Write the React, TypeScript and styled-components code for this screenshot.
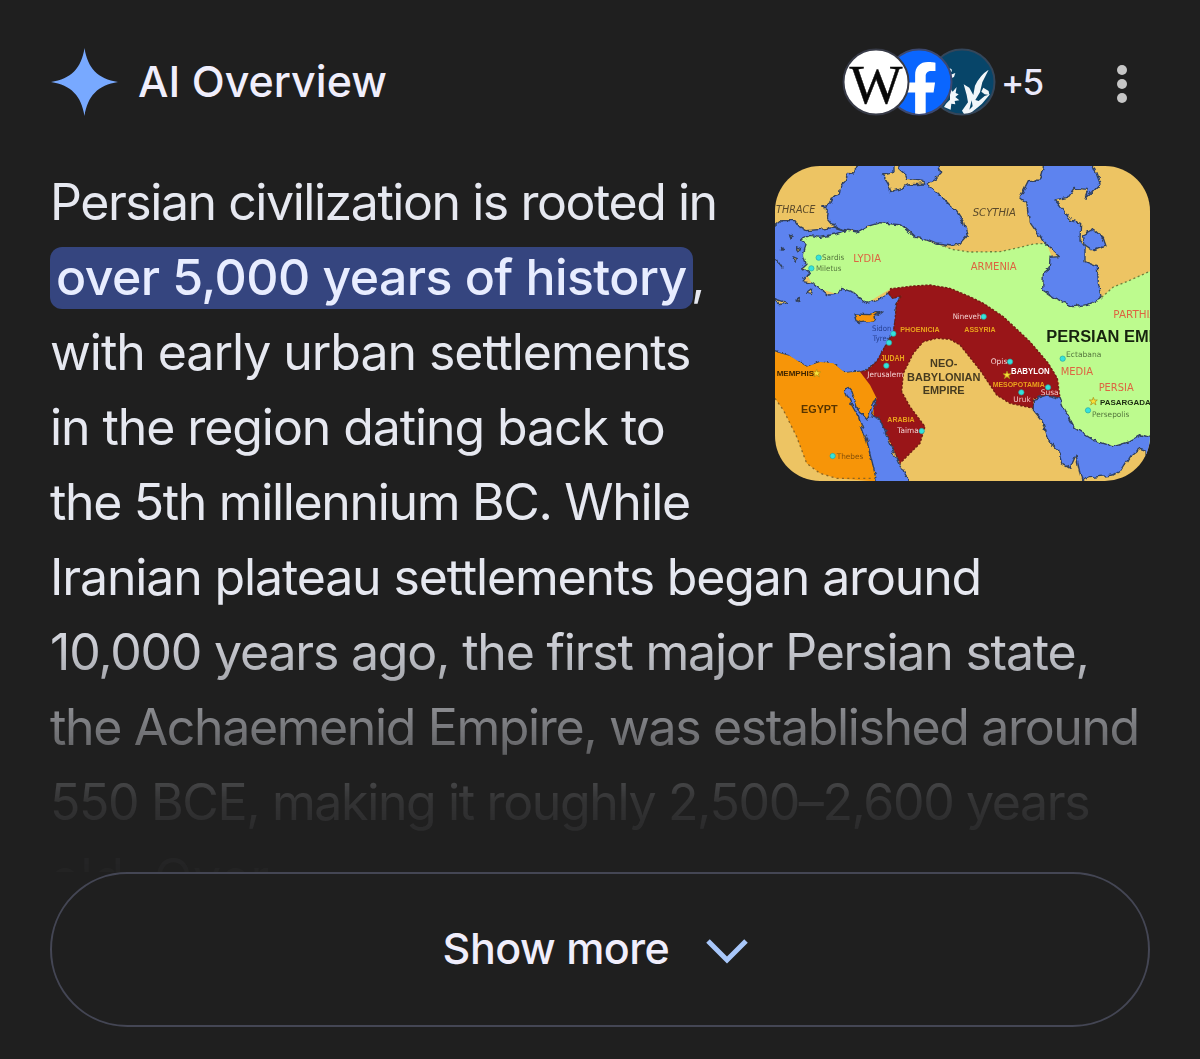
import React, { ReactElement } from 'react'
import { FaFacebookF } from 'react-icons/fa'
import styled, { createGlobalStyle } from 'styled-components'

const FONT = "Inter, 'Open Sans', sans-serif"

const GlobalStyle = createGlobalStyle`
  body {
    margin: 0;
    background: #1f1f1f;
    font-family: ${FONT};
  }
`

const Card = styled.main`
  box-sizing: border-box;
  display: flex;
  flex-direction: column;
  width: 1200px;
  height: 1059px;
  padding: 44px 50px 32px;
  overflow: hidden;
  background: #1f1f1f;
`

const Header = styled.header`
  display: flex;
  align-items: center;
  height: 76px;
  padding-left: 1px;
`

const Title = styled.h1`
  flex: 1;
  margin: 0 0 2px 20px;
  color: #f0eefc;
  font-size: 43px;
  font-weight: 500;
  line-height: 74px;
  letter-spacing: 0;
`

const Sources = styled.div`
  display: flex;
  align-items: center;
`

const SourceBadge = styled.svg<{ $layer: number }>`
  display: block;
  z-index: ${({ $layer }) => $layer};
  width: 68px;
  height: 68px;
  margin: 0 -25px 1px 0;
`

const SourceCount = styled.span`
  width: 42px;
  margin-left: 30px;
  color: #e9e8fb;
  font-size: 35px;
  font-weight: 500;
  letter-spacing: -1.8px;
`

const MenuButton = styled.button`
  display: flex;
  flex-direction: column;
  gap: 4px;
  margin: 3px 23px 0 74px;
  padding: 0;
  border: 0;
  background: none;
`

const Dot = styled.span`
  width: 10px;
  height: 10px;
  border-radius: 50%;
  background: #c6c6c6;
`

const Body = styled.section`
  display: flex;
  justify-content: space-between;
  height: 707px;
  margin-top: 45px;
  overflow: hidden;
  mask-image: linear-gradient(
    #000 450px,
    rgba(0, 0, 0, 0.45) 562px,
    rgba(0, 0, 0, 0.1) 636px,
    rgba(0, 0, 0, 0.03) 690px,
    rgba(0, 0, 0, 0.02) 707px
  );
`

const Summary = styled.p`
  flex: none;
  width: 725px;
  margin: 0;
  color: #e6e8f0;
  font-size: 50px;
  line-height: 75px;
`

const Line = styled.span<{ $tracking: number }>`
  display: block;
  height: 75px;
  letter-spacing: ${({ $tracking }) => $tracking}px;
  white-space: nowrap;
`

const Highlight = styled.mark`
  display: inline-block;
  box-sizing: border-box;
  width: 643px;
  height: 62px;
  margin-right: -2px;
  padding-left: 6px;
  border-radius: 12px;
  background: #35457f;
  color: #e8edff;
  font-weight: 500;
  line-height: 60px;
`

const MapThumb = styled.svg`
  display: block;
  flex: none;
  width: 375px;
  height: 315px;
  margin-top: 1px;
  border-radius: 45px;
`

const ShowMore = styled.button`
  display: flex;
  flex: none;
  align-items: center;
  justify-content: center;
  box-sizing: border-box;
  height: 155px;
  padding: 0 9px 3px 0;
  border: 2px solid #444654;
  border-radius: 78px;
  background: #1f1f1f;
  color: #f0eefc;
  font-family: ${FONT};
  font-size: 43px;
  font-weight: 500;
  letter-spacing: -0.5px;
`

const Chevron = styled.svg`
  width: 42px;
  height: 26px;
  margin: 6px 0 0 37px;
`

const LINES = [
  { text: 'with early urban settlements', tracking: -1.05 },
  { text: 'in the region dating back to', tracking: -1.08 },
  { text: 'the 5th millennium BC. While', tracking: -1.34 },
  { text: 'Iranian plateau settlements began around', tracking: -1.14 },
  { text: '10,000 years ago, the first major Persian state,', tracking: -1.2 },
  { text: 'the Achaemenid Empire, was established around', tracking: -1.37 },
  { text: '550 BCE, making it roughly 2,500–2,600 years', tracking: -1.36 },
  { text: 'old. Over', tracking: 0.6 },
]

const Sparkle = (): ReactElement => (
  <svg width="67" height="68" viewBox="0 0 67 68">
    <path d="M33.5 0C36.5 20 47 31 67 34C47 37 36.5 48 33.5 68C30.5 48 20 37 0 34C20 31 30.5 20 33.5 0Z" fill="#78a9ff" />
  </svg>
)

const SourceIcons = (): ReactElement => (
  <>
    <SourceBadge $layer={3} viewBox="0 0 68 68">
      <circle cx="34" cy="34" r="32.5" fill="#fff" stroke="#373a46" strokeWidth="2" />
      <text
        x="7.5"
        y="55"
        textLength="53"
        lengthAdjust="spacingAndGlyphs"
        fontFamily="'Liberation Serif', serif"
        fontSize="55"
        fill="#080808"
        stroke="#080808"
        strokeWidth="0.4"
      >
        W
      </text>
    </SourceBadge>
    <SourceBadge $layer={2} viewBox="0 0 68 68">
      <clipPath id="badge">
        <circle cx="34" cy="34" r="32" />
      </clipPath>
      <circle cx="34" cy="34" r="32.5" fill="#0a66ff" stroke="#3c4870" strokeWidth="2" />
      <g clipPath="url(#badge)">
        <FaFacebookF x="9" y="14" size={54} color="#fff" />
      </g>
    </SourceBadge>
    <SourceBadge $layer={1} viewBox="0 0 68 68">
      <circle cx="34" cy="34" r="32.5" fill="#074569" stroke="#34465a" strokeWidth="2" />
      <g clipPath="url(#badge)">
        <g transform="translate(-88 -3) scale(0.3333)" fill="#f1f6fa">
          <path d="M446 74Q420 90 405 122L400 150 388 128 371 118 380 150 384 172 366 197 374 210 392 204 412 188 426 176 450 148 434 153 416 168 406 165 420 142 427 112Z" />
          <path d="M328 68 336 74 334 82ZM346 84 342 96 328 102 330 90ZM330 128 338 140 350 126 347 144 356 148 346 156 358 166 344 168 346 178 334 176 332 194 312 186 318 176 330 164Z" />
          <path d="M430 128 446 138 448 150 434 148 424 140Z" />
          <path d="M395 166 398 184 388 194Z" fill="#074569" />
        </g>
      </g>
    </SourceBadge>
  </>
)

type Place = {
  x: number
  y: number
  text: string
  size: number
  width: number
  fill: string
  bold?: boolean
  italic?: boolean
}

const PLACES: Place[] = [
  { x: 18, y: 158, text: 'THRACE', size: 30, width: 118, fill: '#5b4a2b', italic: true },
  { x: 608, y: 168, text: 'SCYTHIA', size: 30, width: 130, fill: '#5b4a2b', italic: true },
  { x: 250, y: 306, text: 'LYDIA', size: 30, width: 83, fill: '#dd6541' },
  { x: 602, y: 331, text: 'ARMENIA', size: 29, width: 138, fill: '#dd6541' },
  { x: 1030, y: 475, text: 'PARTHIA', size: 29, width: 130, fill: '#dd6541' },
  { x: 872, y: 645, text: 'MEDIA', size: 29, width: 97, fill: '#dd6541' },
  { x: 986, y: 692, text: 'PERSIA', size: 29, width: 105, fill: '#dd6541' },
  { x: 156, y: 301, text: 'Sardis', size: 23, width: 67, fill: '#54763d' },
  { x: 138, y: 333, text: 'Miletus', size: 23, width: 76, fill: '#54763d' },
  { x: 888, y: 590, text: 'Ectabana', size: 23, width: 106, fill: '#54763d' },
  { x: 966, y: 770, text: 'Persepolis', size: 23, width: 112, fill: '#54763d' },
  { x: 306, y: 513, text: 'Sidon', size: 23, width: 58, fill: '#263f8f' },
  { x: 308, y: 543, text: 'Tyre', size: 23, width: 42, fill: '#263f8f' },
  { x: 200, y: 897, text: 'Thebes', size: 23, width: 80, fill: '#855009' },
  { x: 20, y: 648, text: 'MEMPHIS', size: 22, width: 112, fill: '#3f2500', bold: true },
  { x: 93, y: 760, text: 'EGYPT', size: 32, width: 110, fill: '#583500', bold: true },
  { x: 480, y: 620, text: 'NEO-', size: 33, width: 82, fill: '#463b20', bold: true },
  { x: 411, y: 662, text: 'BABYLONIAN', size: 33, width: 220, fill: '#463b20', bold: true },
  { x: 458, y: 703, text: 'EMPIRE', size: 33, width: 126, fill: '#463b20', bold: true },
  { x: 829, y: 546, text: 'PERSIAN EMPIRE', size: 48, width: 422, fill: '#17230f', bold: true },
  { x: 990, y: 734, text: 'PASARGADAE', size: 24, width: 168, fill: '#1c2b12', bold: true },
  { x: 391, y: 516, text: 'PHOENICIA', size: 24, width: 118, fill: '#eaa31c', bold: true },
  { x: 583, y: 517, text: 'ASSYRIA', size: 24, width: 94, fill: '#eaa31c', bold: true },
  { x: 332, y: 603, text: 'JUDAH', size: 25, width: 72, fill: '#eaa31c', bold: true },
  { x: 352, y: 787, text: 'ARABIA', size: 24, width: 82, fill: '#eaa31c', bold: true },
  { x: 668, y: 682, text: 'MESOPOTAMIA', size: 24, width: 156, fill: '#eaa31c', bold: true },
  { x: 548, y: 478, text: 'Nineveh', size: 23, width: 86, fill: '#f5d5d5' },
  { x: 292, y: 650, text: 'Jerusalem', size: 23, width: 108, fill: '#f5d5d5' },
  { x: 382, y: 820, text: 'Taima', size: 23, width: 64, fill: '#f5d5d5' },
  { x: 662, y: 611, text: 'Opis', size: 23, width: 50, fill: '#f5d5d5' },
  { x: 723, y: 641, text: 'BABYLON', size: 25, width: 116, fill: '#fff', bold: true },
  { x: 812, y: 706, text: 'Susa', size: 23, width: 54, fill: '#f5c5c5' },
  { x: 730, y: 726, text: 'Uruk', size: 23, width: 52, fill: '#f5c5c5' },
]

const CITIES = [
  [146, 293],
  [124, 325],
  [641, 470],
  [370, 521],
  [357, 548],
  [349, 617],
  [455, 813],
  [188, 888],
  [720, 605],
  [834, 682],
  [754, 697],
  [878, 596],
  [954, 751],
]

const CAPITALS = [
  [140, 640],
  [711, 645],
  [970, 724],
]

const STAR = 'M0-12 3-4 12-4 5 2 8 11 0 5-8 11-5 2-12-4-3-4Z'

const EmpireMap = (): ReactElement => (
  <MapThumb viewBox="15 18 1125 945" preserveAspectRatio="none">
    <defs>
      <filter id="coast" x="-5%" y="-5%" width="110%" height="110%">
        <feTurbulence type="fractalNoise" baseFrequency="0.055" numOctaves="2" seed="4" />
        <feDisplacementMap in="SourceGraphic" scale="16" xChannelSelector="R" yChannelSelector="G" />
      </filter>
    </defs>
    <rect width="1200" height="1000" fill="#edc463" />
    {/* Lydia, Armenia, Media and Persia */}
    <path
      d="M90 235 145 220 215 205 262 215 330 185 395 195 435 230 500 252 545 268 600 276 690 275 750 262 790 252 830 250 900 440 995 412 1030 381 1070 365 1160 325V845L1080 870H960L805 740 870 670 700 470 540 385 355 390 290 430 130 380 90 300Z"
      fill="#bdfb8e"
    />
    <path
      d="M510 252 545 268 600 276 690 275 750 262 790 252 830 250M995 412 1030 381 1070 365 1160 325"
      fill="none"
      stroke="#6c803d"
      strokeWidth="4"
      strokeDasharray="6 8"
    />
    <g filter="url(#coast)" stroke="#30415f" strokeWidth="4" strokeLinejoin="round">
      {/* Black Sea, Crimea */}
      <path
        d="M264 5 250 42 235 40 225 65 212 75 208 102 190 108 178 132 158 138 175 152 172 175 190 197 212 207 262 216 290 200 330 188 395 195 418 215 435 232 465 238 500 252 545 258 570 250 592 225 580 185 560 155 530 125 500 95 470 70 495 58 512 40 505 5Z"
        fill="#5d83ef"
      />
      <path
        d="M340 45 372 37 372 5 385 5 388 28 408 45 412 58 462 64 465 72 412 75 395 85 362 95 355 70Z"
        fill="#edc463"
      />
      {/* Aegean and Mediterranean */}
      <path
        d="M-5 215 35 182 75 182 88 200 110 212 150 208 195 202 225 212 195 222 150 232 120 226 90 240 108 252 100 285 108 310 95 322 118 340 98 365 130 370 150 385 175 405 205 402 215 385 250 397 290 430 320 422 355 400 368 415 395 407 380 430 375 480 370 520 345 560 320 605 290 632 225 638 190 610 150 606 110 620 60 588 -5 570Z"
        fill="#5d83ef"
      />
      {/* Caspian Sea */}
      <path
        d="M824 5 808 60 775 62 750 112 770 130 778 185 820 245 868 290 840 292 838 325 820 340 818 390 850 412 910 440 955 433 995 415 985 370 982 320 945 305 945 260 930 240 932 190 900 180 880 150 855 120 892 112 912 85 955 88 945 115 965 96 990 70 965 5Z"
        fill="#5d83ef"
      />
      <path d="M940 225 970 208 1000 235 1008 258 970 272 945 255Z" fill="#5d83ef" />
      {/* islands */}
      <path
        d="M58 222 70 228 64 236ZM78 260 92 266 88 274ZM68 290 82 296 78 304ZM20 300 36 324 26 312ZM12 415 50 428 30 434ZM110 400 128 386 124 404ZM80 418 88 412 86 428ZM35 262 38 270 34 270Z"
        fill="#edc463"
      />
      <path d="M252 462 300 464 336 452 312 470 314 482 272 488 258 482Z" fill="#f79508" />
    </g>
    {/* Babylonian crescent */}
    <path
      d="M355 400 362 386 430 378 480 375 540 385 600 410 640 430 700 470 780 545 835 610 862 655 870 715 790 715 790 745 720 730 680 705 630 630 570 555 540 538 500 535 460 545 430 580 400 640 395 695 420 740 465 800 450 850 390 910 330 780 306 765 318 715 290 670 270 635 290 632 320 605 345 560 370 520 375 480 380 430 395 407 368 415Z"
      fill="#991518"
      stroke="#721b12"
      strokeWidth="4"
      strokeDasharray="7 5"
    />
    {/* Egypt */}
    <path
      d="M15 575 60 588 110 620 150 606 190 610 225 638 270 635 300 675 320 715 310 740 325 965 200 955 150 940 110 910 80 830 40 750 15 715Z"
      fill="#f79508"
    />
    <path
      d="M15 715 40 750 80 830 110 910 150 940 200 955 320 955"
      fill="none"
      stroke="#8c6523"
      strokeWidth="4"
      strokeDasharray="6 10"
    />
    <g filter="url(#coast)" stroke="#30415f" strokeWidth="4" strokeLinejoin="round">
      {/* Red Sea */}
      <path
        d="M232 680 226 692 245 735 265 770 290 840 310 920 322 975 415 975 412 955 388 915 370 875 330 778 306 768 320 715 310 725 292 780 262 747 246 695Z"
        fill="#5d83ef"
      />
      {/* Persian Gulf */}
      <path
        d="M790 718 830 705 870 715 880 740 915 805 970 840 1030 860 1080 845 1115 825 1150 835 1150 960 1125 910 1125 870 1110 865 1080 890 1055 930 1030 945 960 953 935 962 918 885 900 925 875 910 865 870 832 835 815 780 790 750Z"
        fill="#5d83ef"
      />
    </g>
    {CITIES.map(([x, y]) => (
      <circle key={`${x}-${y}`} cx={x} cy={y} r="8" fill="#35e3dc" stroke="#28a5a0" strokeWidth="2" />
    ))}
    {CAPITALS.map(([x, y]) => (
      <path key={x} d={STAR} transform={`translate(${x} ${y})`} fill="#fae139" stroke="#a88a13" strokeWidth="2" />
    ))}
    {PLACES.map(({ x, y, text, size, width, fill, bold, italic }) => (
      <text
        key={text}
        x={x}
        y={y}
        textLength={width}
        lengthAdjust="spacingAndGlyphs"
        fill={fill}
        fontFamily={bold ? "'Liberation Sans', sans-serif" : "'DejaVu Sans', sans-serif"}
        fontSize={size}
        fontWeight={bold ? 700 : 400}
        fontStyle={italic ? 'italic' : 'normal'}
      >
        {text}
      </text>
    ))}
  </MapThumb>
)

const App = (): ReactElement => (
  <>
    <GlobalStyle />
    <Card>
      <Header>
        <Sparkle />
        <Title>AI Overview</Title>
        <Sources>
          <SourceIcons />
          <SourceCount>+5</SourceCount>
        </Sources>
        <MenuButton aria-label="More options">
          <Dot />
          <Dot />
          <Dot />
        </MenuButton>
      </Header>
      <Body>
        <Summary>
          <Line $tracking={-1.45}>Persian civilization is rooted in</Line>
          <Line $tracking={-0.57}>
            <Highlight>over 5,000 years of history</Highlight>,
          </Line>
          {LINES.map(({ text, tracking }) => (
            <Line key={text} $tracking={tracking}>
              {text}
            </Line>
          ))}
        </Summary>
        <EmpireMap />
      </Body>
      <ShowMore>
        Show more
        <Chevron viewBox="0 0 42 26">
          <path d="M2 3 21 22 40 3" fill="none" stroke="#a8c7fa" strokeWidth="5" />
        </Chevron>
      </ShowMore>
    </Card>
  </>
)

export default App
